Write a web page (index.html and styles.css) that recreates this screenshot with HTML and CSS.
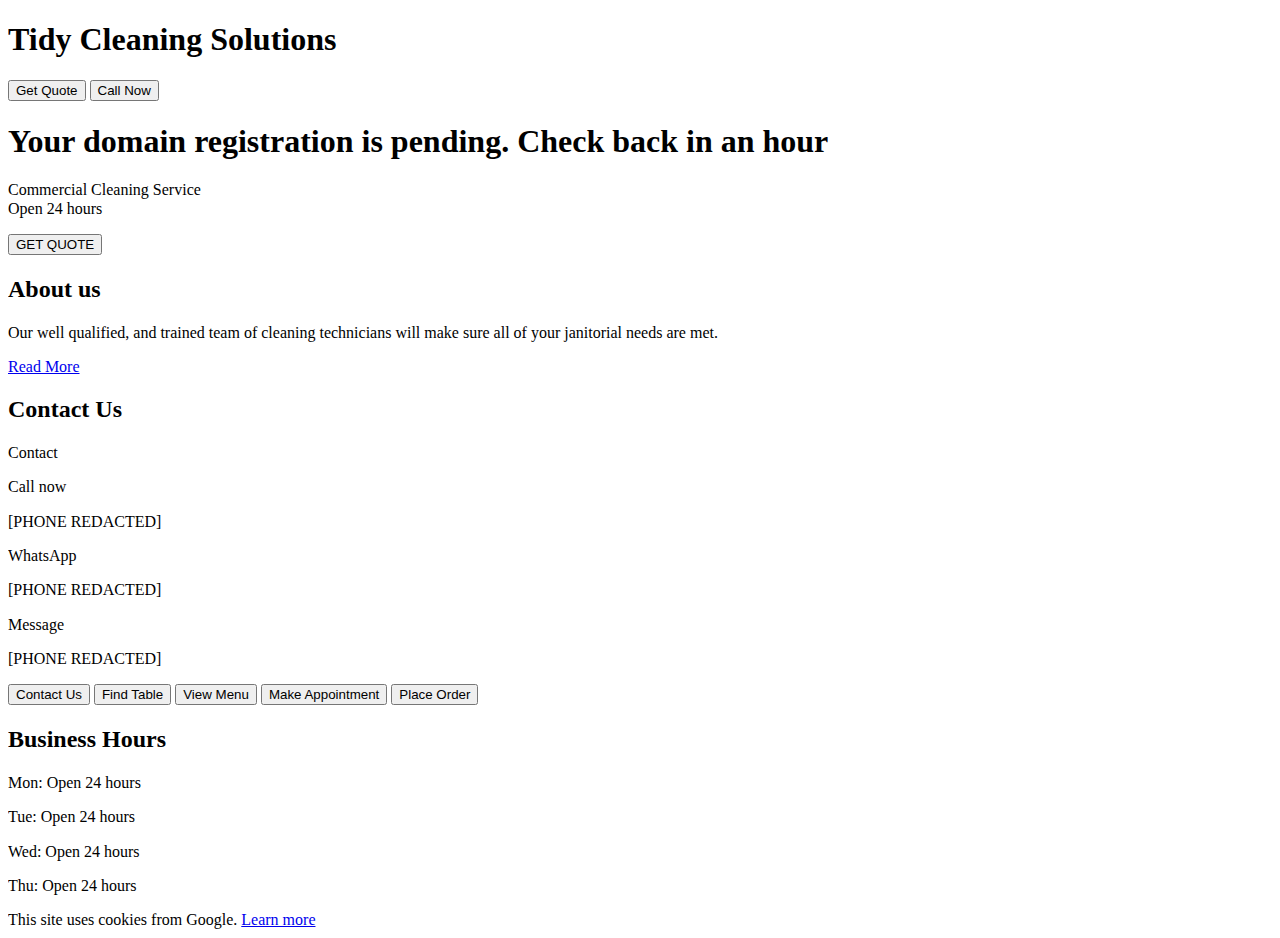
FILE: index.html
```html
<!DOCTYPE html>
<html lang="en">
<head>
<meta charset="utf-8">
<title>Tidy Cleaning Solutions</title>
<link rel="stylesheet" href="styles.css">
</head>
<body class="page">
<header class="site-header">
  <h1 class="site-title">Tidy Cleaning Solutions</h1>
  <div class="btn-row">
    <button class="btn">Get Quote</button>
    <button class="btn">Call Now</button>
  </div>
</header>
<section class="hero">
  <h1 class="hero-title">Your domain registration is pending. Check back in an hour</h1>
  <div class="hero-info">Commercial Cleaning Service<br>Open 24 hours</div>
  <p class="btn-row"><button class="btn">GET QUOTE</button></p>
</section>
<section class="about">
  <h2 class="section-title">About us</h2>
  <p class="about-text">Our well qualified, and trained team of cleaning technicians will make sure all of your janitorial needs are met.</p>
  <div class="about-link"><a href="#">Read More</a></div>
</section>
<section class="contact">
  <h2 class="section-title">Contact Us</h2>
  <p>Contact</p>
  <p>Call now</p>
  <p>[PHONE REDACTED]</p>
  <p>WhatsApp</p>
  <p>[PHONE REDACTED]</p>
  <p>Message</p>
  <p>[PHONE REDACTED]</p>
  <div class="btn-row">
    <button class="btn">Contact Us</button>
    <button class="btn">Find Table</button>
    <button class="btn">View Menu</button>
    <button class="btn">Make Appointment</button>
    <button class="btn">Place Order</button>
  </div>
</section>
<section class="hours">
  <h2 class="section-title">Business Hours</h2>
  <p>Mon: Open 24 hours</p>
  <p>Tue: Open 24 hours</p>
  <p>Wed: Open 24 hours</p>
  <p>Thu: Open 24 hours</p>
</section>
<footer class="cookie-note">
  <p>This site uses cookies from Google. <a href="#">Learn more</a></p>
</footer>
</body>
</html>
```

FILE: styles.css
```css
.page {
  margin: 0 8px 8px;
  font-family: "Liberation Serif", "Times New Roman", serif;
  line-height: 1.15;
  color: #000;
  background: #fff;
}

.site-title,
.hero-title {
  font-size: 2em;
  line-height: 1.15;
  margin: 0.67em 0;
}

.section-title {
  font-size: 1.5em;
  line-height: 1.15;
  margin: 0.83em 0;
}

.btn-row {
  min-height: 22px;
}

.btn {
  font-family: "Liberation Sans", Arial, sans-serif;
  line-height: normal;
}
```
